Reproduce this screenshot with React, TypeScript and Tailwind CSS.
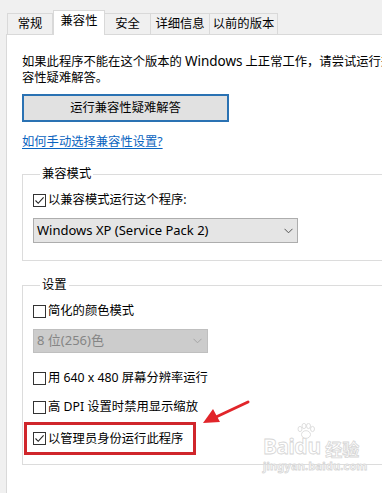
import React from "react";

const tabs = [
  { label: "常规", w: "w-[46px]" },
  { label: "兼容性", w: "w-[52px]", active: true },
  { label: "安全", w: "w-[47px]" },
  { label: "详细信息", w: "w-[60px]" },
  { label: "以前的版本", w: "w-[69px]" },
];

function Check({ checked, label, disabled }: { checked?: boolean; label: string; disabled?: boolean }) {
  return (
    <div className="flex items-center h-[16px] leading-[16px]">
      <span className="w-[13px] h-[13px] border border-[#333] bg-white flex items-center justify-center shrink-0">
        {checked && (
          <svg width="11" height="11" viewBox="0 0 11 11">
            <path d="M1.5 5.5 L4.2 8.3 L9.6 2.3" fill="none" stroke="#222" strokeWidth="1.1" />
          </svg>
        )}
      </span>
      <span className={"ml-[2px] whitespace-nowrap " + (disabled ? "text-[#888]" : "text-black")}>{label}</span>
    </div>
  );
}

function Chevron({ color }: { color: string }) {
  return (
    <svg width="9" height="6" viewBox="0 0 9 6">
      <path d="M0.5 0.8 L4.5 4.8 L8.5 0.8" fill="none" stroke={color} strokeWidth="1" />
    </svg>
  );
}

export default function App() {
  return (
    <div
      className="relative w-[382px] h-[493px] overflow-hidden bg-[#f0f0f0] text-[12.3px] text-black"
      style={{ fontFamily: '"Noto Sans", "Noto Sans CJK SC", sans-serif' }}
    >
      {/* 标签页 */}
      <div className="flex items-end h-[34px] pl-[7px]">
        {tabs.map((t) =>
          t.active ? (
            <div
              key={t.label}
              className={`${t.w} h-[25px] -mb-px relative z-10 bg-white border border-b-0 border-[#d9d9d9] flex items-center justify-center pb-[3px]`}
            >
              {t.label}
            </div>
          ) : (
            <div
              key={t.label}
              className={`${t.w} h-[21px] bg-[#f0f0f0] border border-b-0 border-[#d9d9d9] -ml-px first:ml-0 flex items-center justify-center`}
            >
              {t.label}
            </div>
          )
        )}
      </div>

      {/* 内容面板 */}
      <div className="ml-[6px] h-[459px] bg-white border-l border-t border-[#d9d9d9] pl-[15px] pt-[18px]">
        <p className="leading-[16px] whitespace-nowrap">
          如果此程序不能在这个版本的<span className="text-[13.5px] mx-[3px]">Windows</span>上正常工作，请尝试运行兼
          <br />
          容性疑难解答。
        </p>

        <button className="mt-[8px] w-[207px] h-[28px] bg-[#e1e1e1] border-2 border-[#2a72b3] flex items-center justify-center leading-none">
          运行兼容性疑难解答
        </button>

        <div className="mt-[12px] leading-[16px] text-[#0a64c0] underline underline-offset-2">
          如何手动选择兼容性设置?
        </div>

        <fieldset className="mt-[16px] w-[420px] border border-[#dcdcdc] pl-[10px] pb-[17px]">
          <legend className="ml-[7px] px-[2px] leading-[16px]">兼容模式</legend>
          <div className="mt-[10px]">
            <Check checked label="以兼容模式运行这个程序:" />
          </div>
          <div className="mt-[10px] w-[265px] h-[25px] bg-[#e5e5e5] border border-[#adadad] flex items-center justify-between pl-[3px] pr-[4px] text-[13px]">
            <span>Windows XP (Service Pack 2)</span>
            <Chevron color="#555" />
          </div>
        </fieldset>

        <fieldset className="mt-[16px] w-[420px] border border-[#dcdcdc] pl-[10px] pb-[9px]">
          <legend className="ml-[7px] px-[2px] leading-[16px]">设置</legend>
          <div className="mt-[10px]">
            <Check label="简化的颜色模式" />
          </div>
          <div className="mt-[10px] w-[175px] h-[24px] bg-[#cccccc] border border-[#bfbfbf] flex items-center justify-between pl-[3px] pr-[5px] text-[13px] text-[#858585]">
            <span>8 位(256)色</span>
            <Chevron color="#a5a5a5" />
          </div>
          <div className="mt-[17px]">
            <Check label="用 640 x 480 屏幕分辨率运行" />
          </div>
          <div className="mt-[13px]">
            <Check label="高 DPI 设置时禁用显示缩放" />
          </div>
          <div className="mt-[7px] -ml-[9px] w-[172px] h-[33px] border-[3px] border-[#d0262b] flex items-center pl-[6px]">
            <Check checked label="以管理员身份运行此程序" />
          </div>
        </fieldset>
      </div>

      {/* 红色箭头 */}
      <svg className="absolute left-[198px] top-[396px]" width="56" height="32" viewBox="0 0 56 32">
        <line x1="50" y1="6" x2="18" y2="21" stroke="#e1252a" strokeWidth="3" strokeLinecap="round" />
        <polygon points="5,27 15,13 22,26" fill="#e1252a" />
      </svg>

      {/* 百度经验水印 */}
      <div className="absolute left-[263px] top-[436px] text-white leading-none [-webkit-text-stroke:0.8px_#d6d6d6]">
        <div className="relative flex items-end">
          <span className="text-[21px] font-bold tracking-[-0.5px]">Bai</span>
          <span className="relative text-[21px] font-bold">
            du
            <svg className="absolute -top-[13px] left-[2px]" width="20" height="16" viewBox="0 0 20 16">
              <g fill="white" stroke="#d6d6d6" strokeWidth="0.8">
                <ellipse cx="4" cy="6" rx="2" ry="2.6" />
                <ellipse cx="8" cy="3" rx="2" ry="2.6" />
                <ellipse cx="12.5" cy="3" rx="2" ry="2.6" />
                <ellipse cx="16.5" cy="6" rx="2" ry="2.6" />
                <ellipse cx="10" cy="11.5" rx="4.5" ry="3.8" />
              </g>
            </svg>
          </span>
          <span className="text-[17px] font-bold ml-[4px]" style={{ fontFamily: '"Noto Sans CJK SC", sans-serif' }}>
            经验
          </span>
        </div>
        <div className="mt-[3px] text-[11px] font-bold tracking-[0.2px]">jingyan.baidu.com</div>
      </div>
    </div>
  );
}
